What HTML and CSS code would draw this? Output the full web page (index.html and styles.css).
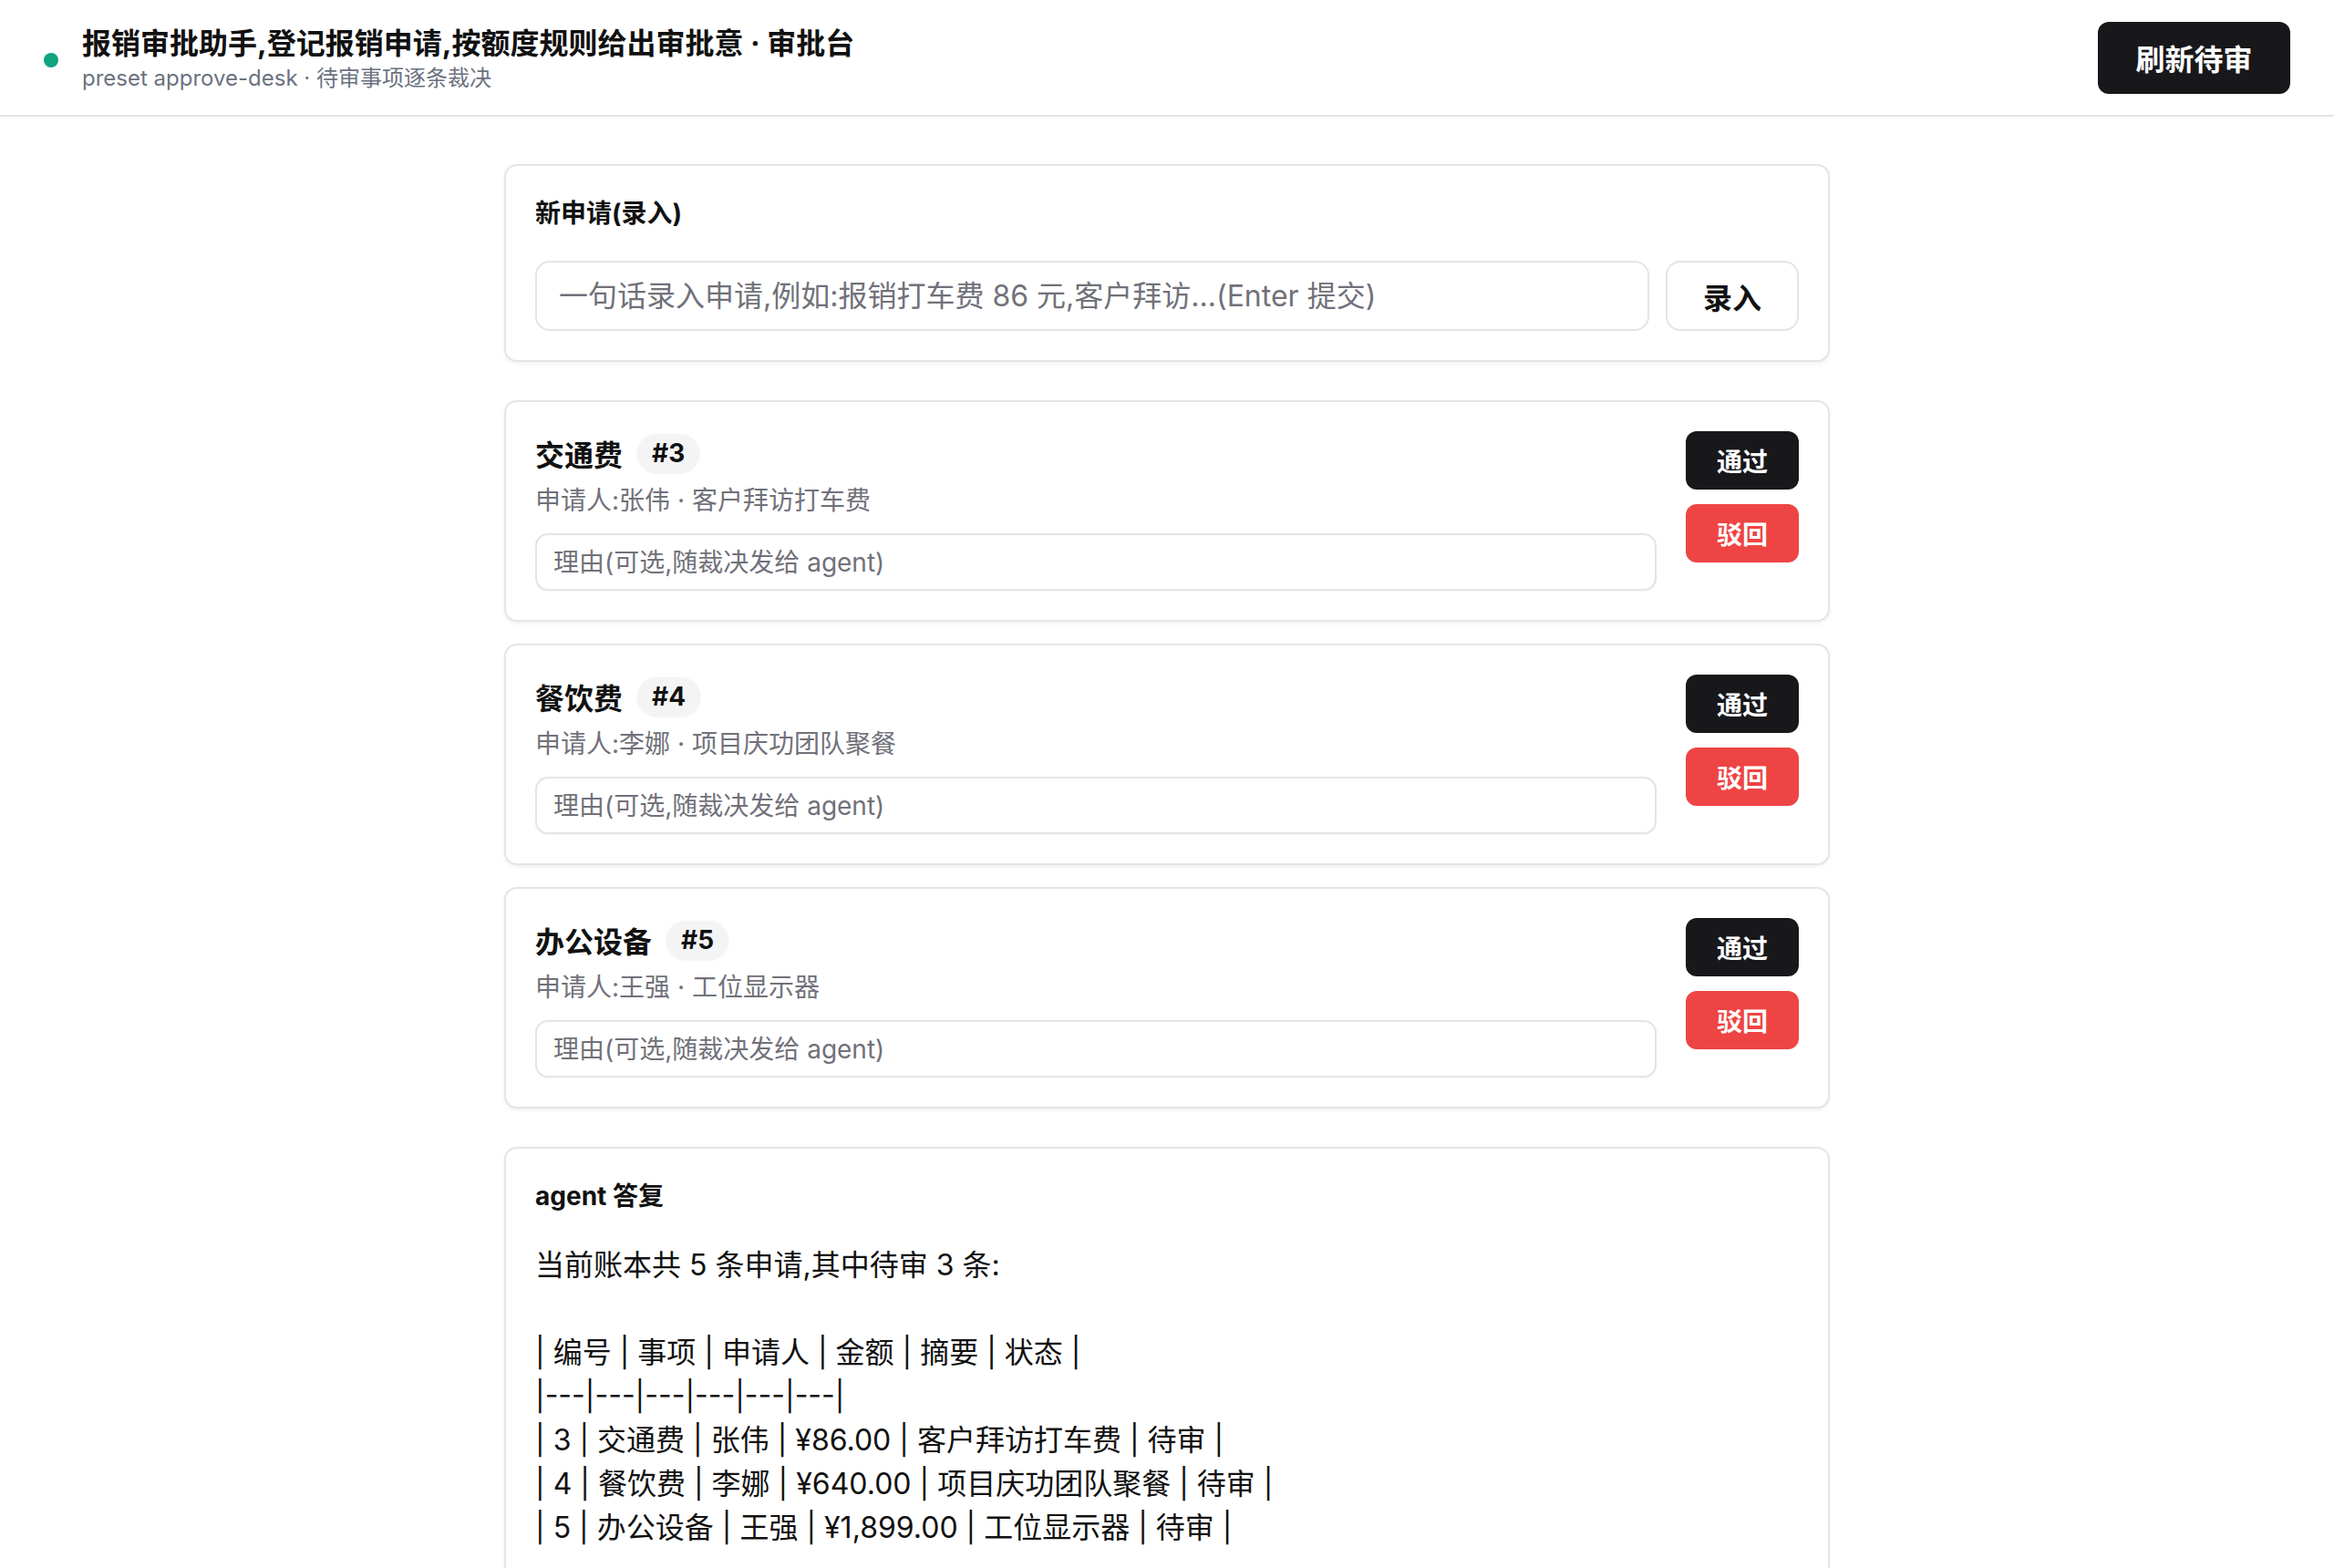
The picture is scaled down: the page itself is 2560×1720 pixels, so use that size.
FILE: index.html
```html
<!DOCTYPE html>
<html lang="zh-CN">
<head>
    <meta charset="UTF-8">
    <meta name="viewport" content="width=device-width, initial-scale=1.0">
    <title>审批台</title>
    <link rel="stylesheet" href="styles.css">
</head>
<body>
    <header class="topbar">
        <div class="brand">
            <span class="status-dot"></span>
            <div class="brand-text">
                <div class="brand-title">报销审批助手,登记报销申请,按额度规则给出审批意 · 审批台</div>
                <div class="brand-sub">preset approve-desk · 待审事项逐条裁决</div>
            </div>
        </div>
        <button class="btn btn-dark btn-refresh">刷新待审</button>
    </header>

    <main class="page">
        <section class="card">
            <h2 class="card-title">新申请(录入)</h2>
            <div class="entry-row">
                <input class="entry-input" type="text" placeholder="一句话录入申请,例如:报销打车费 86 元,客户拜访...(Enter 提交)">
                <button class="btn btn-outline">录入</button>
            </div>
        </section>

        <section class="pending-list">
            <div class="card pending">
                <div class="pending-main">
                    <div class="pending-head">
                        <span class="pending-name">交通费</span>
                        <span class="pending-id">#3</span>
                    </div>
                    <div class="pending-meta">申请人:张伟 · 客户拜访打车费</div>
                    <input class="reason-input" type="text" placeholder="理由(可选,随裁决发给 agent)">
                </div>
                <div class="pending-actions">
                    <button class="btn btn-dark btn-small">通过</button>
                    <button class="btn btn-red btn-small">驳回</button>
                </div>
            </div>

            <div class="card pending">
                <div class="pending-main">
                    <div class="pending-head">
                        <span class="pending-name">餐饮费</span>
                        <span class="pending-id">#4</span>
                    </div>
                    <div class="pending-meta">申请人:李娜 · 项目庆功团队聚餐</div>
                    <input class="reason-input" type="text" placeholder="理由(可选,随裁决发给 agent)">
                </div>
                <div class="pending-actions">
                    <button class="btn btn-dark btn-small">通过</button>
                    <button class="btn btn-red btn-small">驳回</button>
                </div>
            </div>

            <div class="card pending">
                <div class="pending-main">
                    <div class="pending-head">
                        <span class="pending-name">办公设备</span>
                        <span class="pending-id">#5</span>
                    </div>
                    <div class="pending-meta">申请人:王强 · 工位显示器</div>
                    <input class="reason-input" type="text" placeholder="理由(可选,随裁决发给 agent)">
                </div>
                <div class="pending-actions">
                    <button class="btn btn-dark btn-small">通过</button>
                    <button class="btn btn-red btn-small">驳回</button>
                </div>
            </div>
        </section>

        <section class="card">
            <h2 class="card-title">agent 答复</h2>
<div class="reply">当前账本共 5 条申请,其中待审 3 条:

| 编号 | 事项 | 申请人 | 金额 | 摘要 | 状态 |
|---|---|---|---|---|---|
| 3 | 交通费 | 张伟 | ¥86.00 | 客户拜访打车费 | 待审 |
| 4 | 餐饮费 | 李娜 | ¥640.00 | 项目庆功团队聚餐 | 待审 |
| 5 | 办公设备 | 王强 | ¥1,899.00 | 工位显示器 | 待审 |</div>
        </section>
    </main>
</body>
</html>
```

FILE: styles.css
```css
* {
    margin: 0;
    padding: 0;
    box-sizing: border-box;
}

body {
    font-family: 'Inter', 'Noto Sans CJK SC', sans-serif;
    background-color: #fff;
    color: #18181b;
}

/* Top bar */
.topbar {
    height: 128px;
    padding: 0 48px;
    display: flex;
    justify-content: space-between;
    align-items: center;
    border-bottom: 2px solid #e5e5e5;
}

.brand {
    display: flex;
    align-items: center;
    gap: 26px;
    padding-top: 6px;
}

.status-dot {
    width: 16px;
    height: 16px;
    border-radius: 50%;
    background-color: #10a37f;
}

.brand-title {
    font-size: 32px;
    line-height: 40px;
    font-weight: 700;
    color: #111;
}

.brand-sub {
    font-size: 24px;
    line-height: 36px;
    color: #6b7280;
}

/* Buttons */
.btn {
    font-family: inherit;
    border: none;
    cursor: pointer;
    font-weight: 700;
}

.btn-dark {
    background-color: #18181b;
    color: #fff;
}

.btn-red {
    background-color: #ef4444;
    color: #fff;
}

.btn-outline {
    width: 146px;
    height: 77px;
    flex-shrink: 0;
    background-color: #fff;
    color: #111;
    border: 2px solid #e4e4e7;
    border-radius: 16px;
    font-size: 32px;
    font-weight: 600;
}

.btn-refresh {
    width: 211px;
    height: 79px;
    border-radius: 12px;
    font-size: 32px;
}

.btn-small {
    width: 124px;
    height: 64px;
    border-radius: 12px;
    font-size: 28px;
}

/* Main column */
.page {
    width: 1454px;
    margin: 52px auto 0;
    display: flex;
    flex-direction: column;
    gap: 42px;
}

.card {
    background-color: #fff;
    border: 2px solid #e5e5e5;
    border-radius: 14px;
    box-shadow: 0 2px 4px rgba(0, 0, 0, 0.06);
    padding: 32px;
}

.card-title {
    font-size: 28px;
    line-height: 40px;
    font-weight: 700;
    color: #111;
    margin-bottom: 32px;
}

.entry-row {
    display: flex;
    gap: 18px;
}

.entry-input {
    flex: 1;
    height: 77px;
    padding: 0 24px;
    border: 2px solid #e4e4e7;
    border-radius: 16px;
    font-family: inherit;
    font-size: 32px;
    color: #111;
    outline: none;
}

.entry-input::placeholder,
.reason-input::placeholder {
    color: #71717a;
}

/* Pending items */
.pending-list {
    display: flex;
    flex-direction: column;
    gap: 24px;
}

.pending {
    display: flex;
    gap: 32px;
}

.pending-main {
    flex: 1;
}

.pending-head {
    height: 48px;
    display: flex;
    align-items: center;
    gap: 16px;
}

.pending-name {
    font-size: 32px;
    font-weight: 700;
    color: #111;
}

.pending-id {
    height: 42px;
    padding: 0 16px;
    display: flex;
    align-items: center;
    border-radius: 21px;
    background-color: #f4f4f5;
    box-shadow: 0 1px 3px rgba(0, 0, 0, 0.08);
    font-size: 28px;
    font-weight: 700;
    color: #111;
}

.pending-meta {
    margin-top: 8px;
    font-size: 28px;
    line-height: 40px;
    color: #71717a;
}

.reason-input {
    display: block;
    width: 100%;
    height: 63px;
    margin-top: 16px;
    padding: 0 18px;
    border: 2px solid #e4e4e7;
    border-radius: 14px;
    box-shadow: 0 1px 2px rgba(0, 0, 0, 0.04);
    font-family: inherit;
    font-size: 28px;
    color: #111;
    outline: none;
}

.pending-actions {
    display: flex;
    flex-direction: column;
    gap: 16px;
}

/* Agent reply */
.reply {
    white-space: pre-wrap;
    font-size: 32px;
    line-height: 48px;
    color: #111;
}
```
